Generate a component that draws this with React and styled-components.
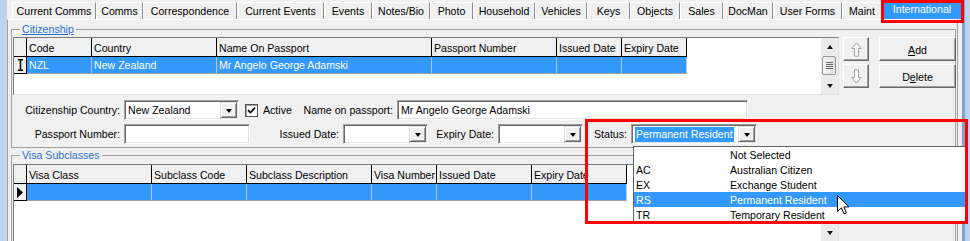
import React from "react";
import styled, { createGlobalStyle } from "styled-components";

const GlobalStyle = createGlobalStyle`
  html, body { margin: 0; padding: 0; background: #f0f0f0; }
  body {
    font-family: "Liberation Sans", Arial, sans-serif;
    font-size: 10.6px;
    color: #000;
  }
  * { box-sizing: border-box; }
`;

const tabs = [
  ["Current Comms", 84], ["Comms", 47], ["Correspondence", 94], ["Current Events", 87],
  ["Events", 48], ["Notes/Bio", 58], ["Photo", 43], ["Household", 62], ["Vehicles", 52],
  ["Keys", 43], ["Objects", 50], ["Sales", 43], ["DocMan", 50], ["User Forms", 69],
  ["Maint", 40],
];

const citizenCols = [
  ["Code", 65], ["Country", 125], ["Name On Passport", 215],
  ["Passport Number", 125], ["Issued Date", 65], ["Expiry Date", 65],
];

const visaCols = [
  ["Visa Class", 125], ["Subclass Code", 95], ["Subclass Description", 125],
  ["Visa Number", 65], ["Issued Date", 95], ["Expiry Date", 95],
];

const statuses = [
  ["", "Not Selected"],
  ["AC", "Australian Citizen"],
  ["EX", "Exchange Student"],
  ["RS", "Permanent Resident"],
  ["TR", "Temporary Resident"],
];

export default function App() {
  return (
    <Window>
      <GlobalStyle />
      <LeftFrame />
      <Main>
        <TabBar>
          {tabs.map(([t, w]) => <Tab key={t} $w={w}>{t}</Tab>)}
          <Tab $w={80} $active>International</Tab>
        </TabBar>
        <Panel>
          <Group>
            <Legend><u>Citizenship</u></Legend>
            <TopRow>
              <DataGrid
                columns={citizenCols}
                row={["NZL", "New Zealand", "Mr Angelo George Adamski", "", "", ""]}
                marker={<IBeam />}
                height={58}
                thumb
              />
              <ButtonColumn $w={26}>
                <RaisedButton><HollowArrow /></RaisedButton>
                <RaisedButton><HollowArrow $down /></RaisedButton>
              </ButtonColumn>
              <ButtonColumn $w={77} $gap={6}>
                <RaisedButton><u>A</u>dd</RaisedButton>
                <RaisedButton>D<u>e</u>lete</RaisedButton>
              </ButtonColumn>
            </TopRow>
            <FormRow>
              <Label $w={111}>Citizenship Country:</Label>
              <Combo $w={115}><ComboText>New Zealand</ComboText><DropBtn /></Combo>
              <CheckField>
                <CheckBox>
                  <svg width="9" height="9" viewBox="0 0 9 9">
                    <path d="M1 4.2 L3.4 6.6 L8 1.6" fill="none" stroke="#000" strokeWidth="1.7" />
                  </svg>
                </CheckBox>
                Active
              </CheckField>
              <Label $w={100}>Name on passport:</Label>
              <TextBox $w={351}>Mr Angelo George Adamski</TextBox>
            </FormRow>
            <FormRow $gap={4}>
              <Label $w={111}>Passport Number:</Label>
              <TextBox $w={126} />
              <Label $w={93}>Issued Date:</Label>
              <Combo $w={85}><ComboText /><DropBtn /></Combo>
              <Label $w={70}>Expiry Date:</Label>
              <Combo $w={85}><ComboText /><DropBtn /></Combo>
              <Label $w={48}>Status:</Label>
              <ComboWrap>
                <Combo $w={126}>
                  <ComboText><Selected>Permanent Resident</Selected></ComboText>
                  <DropBtn />
                </Combo>
                <DropList>
                  {statuses.map(([c, d]) => (
                    <ListItem key={d} $on={c === "RS"}>
                      <ListCode>{c}</ListCode>
                      <span>{d}</span>
                    </ListItem>
                  ))}
                </DropList>
              </ComboWrap>
            </FormRow>
          </Group>
          <Group $second>
            <Legend>Visa Subclasses</Legend>
            <DataGrid
              columns={visaCols}
              row={["", "", "", "", "", ""]}
              marker={<RowArrow />}
              height={78}
            />
          </Group>
        </Panel>
      </Main>
      <RightFrame />
      <RedBox style={{ left: 881, top: 0, width: 83, height: 23 }} />
      <RedBox style={{ left: 585, top: 119, width: 383, height: 105 }} />
      <Pointer />
    </Window>
  );
}

function DataGrid({ columns, row, marker, height, thumb }) {
  return (
    <GridFrame $h={height}>
      <GridBody>
        <GridRow>
          <MarkerCell $head />
          {columns.map(([t, w]) => <HeadCell key={t} $w={w}>{t}</HeadCell>)}
        </GridRow>
        <GridRow>
          <MarkerCell>{marker}</MarkerCell>
          {columns.map(([t, w], i) => <DataCell key={t} $w={w}>{row[i]}</DataCell>)}
        </GridRow>
      </GridBody>
      <ScrollBar>
        <ScrollArrow><Tri $up $size={3} /></ScrollArrow>
        <Track>{thumb && <Thumb />}</Track>
        <ScrollArrow><Tri $size={3} /></ScrollArrow>
      </ScrollBar>
    </GridFrame>
  );
}

function IBeam() {
  return (
    <svg width="7" height="12" viewBox="0 0 7 12">
      <path d="M1 0.75 H6 M3.5 0.75 V11.25 M1 11.25 H6" stroke="#000" strokeWidth="1.5" fill="none" />
    </svg>
  );
}

function RowArrow() {
  return (
    <svg width="6" height="11" viewBox="0 0 6 11">
      <polygon points="0,0 6,5.5 0,11" fill="#000" />
    </svg>
  );
}

function HollowArrow({ $down }) {
  return (
    <svg width="11" height="15" viewBox="0 0 11 15" style={$down ? { transform: "rotate(180deg)" } : undefined}>
      <path d="M5.5 0.8 L10.2 6.5 L7.5 6.5 L7.5 14.2 L3.5 14.2 L3.5 6.5 L0.8 6.5 Z"
        fill="#fafafa" stroke="#a0a0a0" strokeWidth="1" />
    </svg>
  );
}

function Pointer() {
  return (
    <Cursor width="13" height="20" viewBox="0 0 13 20">
      <path d="M0.5 0.5 L0.5 16.5 L4.4 12.8 L7 18.9 L9.4 17.9 L6.9 11.9 L12 11.9 Z"
        fill="#fff" stroke="#000" strokeWidth="1" strokeLinejoin="round" />
    </Cursor>
  );
}

const Window = styled.div`
  position: relative;
  display: flex;
  width: 970px;
  height: 241px;
  overflow: hidden;
  background: #f0f0f0;
`;

const LeftFrame = styled.div`
  flex: none;
  width: 7px;
  background: #bdd3ec;
`;

const RightFrame = styled.div`
  flex: none;
  width: 8px;
  background: linear-gradient(to right, #7ea3cf 0 3px, #bdd3ec 3px);
`;

const Main = styled.div`
  flex: 1;
  min-width: 0;
  display: flex;
  flex-direction: column;
`;

const TabBar = styled.div`
  display: flex;
  align-items: flex-end;
  height: 19px;
  padding-left: 5px;
`;

const Tab = styled.div`
  flex: none;
  width: ${(p) => p.$w}px;
  height: ${(p) => (p.$active ? 19 : 17)}px;
  align-self: ${(p) => (p.$active ? "flex-start" : "flex-end")};
  display: flex;
  justify-content: center;
  align-items: ${(p) => (p.$active ? "flex-start" : "center")};
  padding-top: ${(p) => (p.$active ? 2 : 0)}px;
  background: ${(p) => (p.$active ? "#3399ff" : "#f0f0f0")};
  color: ${(p) => (p.$active ? "#fff" : "#000")};
  border-top: 1px solid #fff;
  border-left: 1px solid #fff;
  border-right: 1px solid #8c8c8c;
  white-space: nowrap;
`;

const Panel = styled.div`
  flex: 1;
  margin-right: 4px;
  padding: 3px 1px 0 3px;
  border-top: 1px solid #fff;
  border-left: 1px solid #a0a0a0;
  border-right: 1px solid #a0a0a0;
`;

const Group = styled.fieldset`
  margin: ${(p) => (p.$second ? "1px 0 0" : "0")};
  padding: ${(p) => (p.$second ? "2px 1px 0" : "1px 1px 3px")};
  min-width: 0;
  height: ${(p) => (p.$second ? "120px" : "auto")};
  border: 1px solid #a0a0a0;
`;

const Legend = styled.legend`
  margin-left: 7px;
  padding: 0 2px;
  height: 13px;
  line-height: 13px;
  color: #2b72c9;
`;

const TopRow = styled.div`
  display: flex;
  align-items: flex-start;
  gap: 4px;
`;

const GridFrame = styled.div`
  flex: none;
  display: flex;
  width: 826px;
  height: ${(p) => p.$h}px;
  background: #fff;
  border: 1px solid;
  border-color: #7a7a7a #e3e3e3 #e3e3e3 #7a7a7a;
`;

const GridBody = styled.div`
  flex: 1;
  display: flex;
  flex-direction: column;
`;

const GridRow = styled.div`
  display: flex;
`;

const MarkerCell = styled.div`
  flex: none;
  width: 13px;
  height: ${(p) => (p.$head ? 19 : 17)}px;
  display: flex;
  align-items: center;
  justify-content: center;
  background: #f0f0f0;
  border-right: 1px solid #000;
  border-bottom: 1px solid #000;
`;

const HeadCell = styled.div`
  flex: none;
  width: ${(p) => p.$w}px;
  height: 19px;
  padding: 1px 0 0 2px;
  display: flex;
  align-items: center;
  background: #f0f0f0;
  border-right: 1px solid #000;
  border-bottom: 1px solid #000;
  white-space: nowrap;
  overflow: hidden;
`;

const DataCell = styled.div`
  flex: none;
  width: ${(p) => p.$w}px;
  height: 17px;
  padding-left: 2px;
  display: flex;
  align-items: center;
  background: #3399ff;
  color: #fff;
  border-right: 1px solid #b4c8dc;
  border-bottom: 1px solid #a0a0a0;
  white-space: nowrap;
  overflow: hidden;
`;

const ScrollBar = styled.div`
  flex: none;
  width: 17px;
  display: flex;
  flex-direction: column;
  background: #ebebeb;
`;

const ScrollArrow = styled.div`
  flex: none;
  height: 17px;
  display: flex;
  align-items: center;
  justify-content: center;
`;

const Tri = styled.span`
  width: 0;
  height: 0;
  border-left: ${(p) => p.$size + 0.5}px solid transparent;
  border-right: ${(p) => p.$size + 0.5}px solid transparent;
  ${(p) => (p.$up ? "border-bottom" : "border-top")}: ${(p) => p.$size + 1}px solid #111;
`;

const Track = styled.div`
  flex: 1;
  padding: 1px 1px;
`;

const Thumb = styled.div`
  height: 19px;
  margin-right: 1px;
  border: 1px solid #989898;
  border-radius: 2px;
  background:
    repeating-linear-gradient(to bottom, #6a6a6a 0 1px, transparent 1px 2px) center / 7px 7px no-repeat,
    linear-gradient(to right, #f4f4f4, #e0e0e0);
`;

const ButtonColumn = styled.div`
  flex: none;
  width: ${(p) => p.$w}px;
  margin-left: ${(p) => p.$gap || 0}px;
  display: flex;
  flex-direction: column;
  gap: 3px;
`;

const RaisedButton = styled.div`
  height: 24px;
  display: flex;
  align-items: center;
  justify-content: center;
  background: #f0f0f0;
  border: 1px solid;
  border-color: #fff #696969 #696969 #fff;
  box-shadow: inset -1px -1px #a0a0a0;
  padding-top: 1px;
`;

const FormRow = styled.div`
  display: flex;
  align-items: center;
  height: 20px;
  margin-top: ${(p) => p.$gap || 5}px;
`;

const Label = styled.div`
  flex: none;
  width: ${(p) => p.$w}px;
  padding-right: 4px;
  text-align: right;
  white-space: nowrap;
`;

const Sunken = styled.div`
  flex: none;
  width: ${(p) => p.$w}px;
  height: 20px;
  display: flex;
  align-items: center;
  background: #fff;
  border: 1px solid;
  border-color: #a0a0a0 #fff #fff #a0a0a0;
  box-shadow: inset 1px 1px #696969, inset -1px -1px #e3e3e3;
  white-space: nowrap;
`;

const TextBox = styled(Sunken)`
  padding-left: 3px;
`;

const Combo = styled(Sunken)`
  padding: 1px;
`;

const ComboText = styled.div`
  flex: 1;
  padding-left: 2px;
  overflow: hidden;
`;

const Selected = styled.span`
  display: inline-block;
  padding: 0 1px;
  line-height: 15px;
  background: #3399ff;
  color: #fff;
`;

const DropBtn = styled.div`
  flex: none;
  width: 17px;
  height: 16px;
  display: flex;
  align-items: center;
  justify-content: center;
  background: #f0f0f0;
  border: 1px solid;
  border-color: #e3e3e3 #696969 #696969 #e3e3e3;
  box-shadow: inset 1px 1px #fff, inset -1px -1px #a0a0a0;
  &::after {
    content: "";
    border-left: 3.5px solid transparent;
    border-right: 3.5px solid transparent;
    border-top: 4px solid #000;
    margin-top: 1px;
  }
`;

const CheckField = styled.div`
  flex: none;
  width: 52px;
  margin-left: 6px;
  display: flex;
  align-items: center;
  gap: 5px;
`;

const CheckBox = styled.div`
  width: 13px;
  height: 13px;
  display: flex;
  align-items: center;
  justify-content: center;
  background: #fff;
  border: 1px solid #555;
  box-shadow: inset 1px 1px #a0a0a0;
`;

const ComboWrap = styled.div`
  position: relative;
`;

const DropList = styled.div`
  position: absolute;
  left: 2px;
  top: 22px;
  width: 333px;
  height: 77px;
  z-index: 2;
  background: #fff;
  border: 1px solid #646464;
`;

const ListItem = styled.div`
  display: flex;
  height: 15px;
  align-items: center;
  padding-left: 2px;
  background: ${(p) => (p.$on ? "#3399ff" : "transparent")};
  color: ${(p) => (p.$on ? "#fff" : "#000")};
`;

const ListCode = styled.span`
  width: 94px;
  flex: none;
`;

const RedBox = styled.div`
  position: absolute;
  z-index: 5;
  border: 3px solid #ff0000;
  pointer-events: none;
`;

const Cursor = styled.svg`
  position: absolute;
  left: 837px;
  top: 195px;
  z-index: 6;
`;
